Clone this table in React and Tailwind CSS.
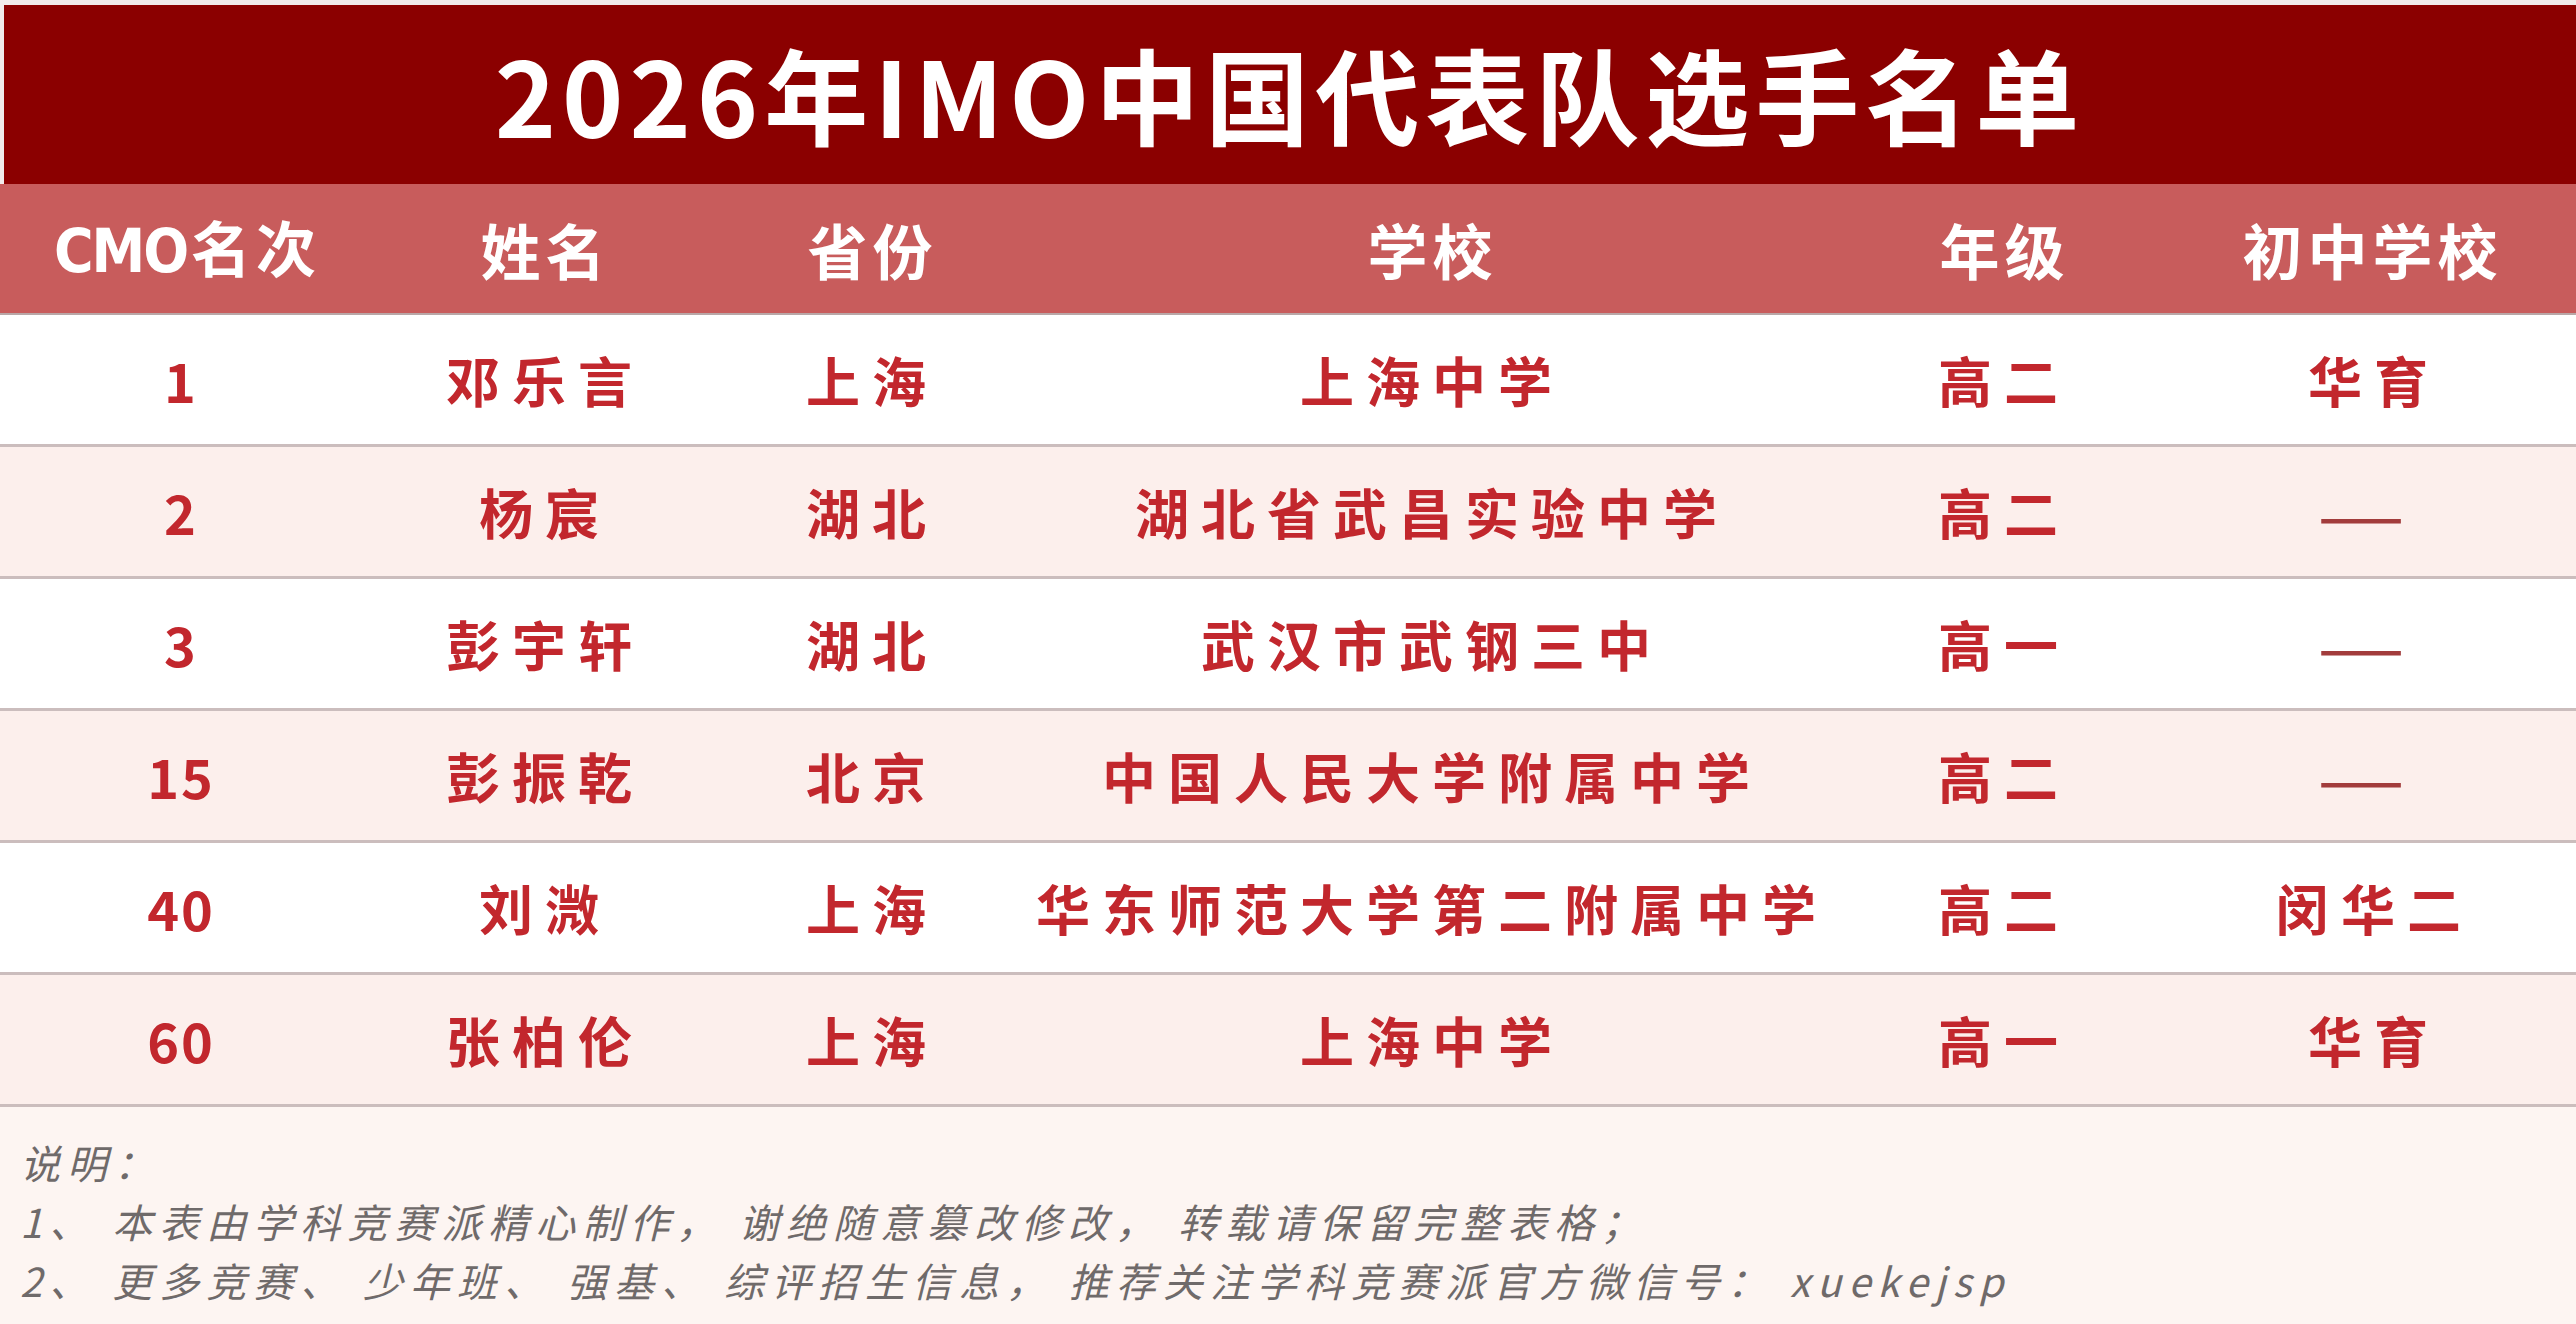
import React from "react";

const cols = "grid grid-cols-[362px_354px_300px_820px_324px_1fr]";

const headers = ["名次", "姓名", "省份", "学校", "年级", "初中学校"];

const players = [
  { rank: "1", name: "邓乐言", prov: "上海", school: "上海中学", grade: "高二", junior: "华育" },
  { rank: "2", name: "杨宸", prov: "湖北", school: "湖北省武昌实验中学", grade: "高二", junior: "—" },
  { rank: "3", name: "彭宇轩", prov: "湖北", school: "武汉市武钢三中", grade: "高一", junior: "—" },
  { rank: "15", name: "彭振乾", prov: "北京", school: "中国人民大学附属中学", grade: "高二", junior: "—" },
  { rank: "40", name: "刘溦", prov: "上海", school: "华东师范大学第二附属中学", grade: "高二", junior: "闵华二" },
  { rank: "60", name: "张柏伦", prov: "上海", school: "上海中学", grade: "高一", junior: "华育" },
];

const Cell = ({ text, num }) => {
  if (text === "—") {
    return (
      <div className="flex items-center justify-center">
        <span className="font-light text-[100px] text-[#a23c3c] tracking-normal leading-none -mt-[12px] pr-[14px]">—</span>
      </div>
    );
  }
  return (
    <div className="flex items-center justify-center">
      <span className={num ? "tracking-[2px]" : "pl-[12px]"}>{text}</span>
    </div>
  );
};

const App = () => {
  return (
    <div className="w-[2576px] h-[1324px] overflow-hidden bg-[#f1ebeb] pt-[5px] pl-[4px] font-['Noto_Sans_CJK_SC','Noto_Sans',sans-serif]">
      {/* title */}
      <div className="h-[179px] bg-[#8b0000] flex items-center justify-center">
        <h1 className="text-[104px] font-bold text-white tracking-[6px] leading-none pb-[4px]">
          2026年IMO中国代表队选手名单
        </h1>
      </div>

      {/* header row */}
      <div className={`${cols} h-[131px] bg-[#c85c5c] border-b-2 border-[#b9a7a7] text-white text-[60px] font-bold tracking-[5px] -ml-[4px] pl-[4px]`}>
        {headers.map((h, i) => (
          <div key={h} className="flex items-center justify-center">
            <span className="pl-[5px]">
              {i === 0 && (
                <span className="font-['DejaVu_Sans_Condensed','Noto_Sans_CJK_SC',sans-serif] tracking-[-2px] pr-[4px]">CMO</span>
              )}
              {h}
            </span>
          </div>
        ))}
      </div>

      {/* data rows */}
      <div className="-ml-[4px]">
        {players.map((p, i) => (
          <div
            key={p.rank}
            className={`${cols} h-[132px] border-b-[3px] border-[#cbbdbd] text-[54px] font-bold text-[#c2272d] tracking-[12px] leading-none ${
              i % 2 === 0 ? "bg-white" : "bg-[#fcefec]"
            }`}
          >
            <Cell text={p.rank} num />
            <Cell text={p.name} />
            <Cell text={p.prov} />
            <Cell text={p.school} />
            <Cell text={p.grade} />
            <Cell text={p.junior} />
          </div>
        ))}
      </div>

      {/* notes */}
      <div className="-ml-[4px] h-[220px] bg-[#fdf5f2] pl-[20px] pt-[26px] italic text-[#6f6a6a] text-[40px] leading-[59px] tracking-[7px]">
        <p>说明：</p>
        <p>1、 本表由学科竞赛派精心制作， 谢绝随意篡改修改， 转载请保留完整表格；</p>
        <p>2、 更多竞赛、 少年班、 强基、 综评招生信息， 推荐关注学科竞赛派官方微信号： xuekejsp</p>
      </div>
    </div>
  );
};

export default App;
